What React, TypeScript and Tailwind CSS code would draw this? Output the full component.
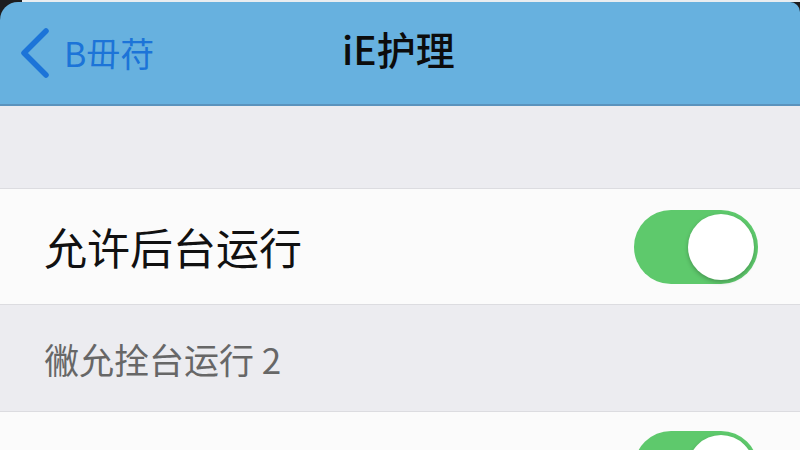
import { useState } from "react";

function Toggle({ on, onChange }: { on: boolean; onChange: () => void }) {
  return (
    <button
      onClick={onChange}
      className={
        "relative flex h-[74px] w-[124px] shrink-0 items-center rounded-full p-[4px] " +
        (on ? "justify-end bg-[#5ec96c]" : "justify-start bg-[#e5e5ea]")
      }
    >
      <span className="h-[66px] w-[66px] rounded-full bg-white shadow-[0_2px_4px_rgba(0,0,0,0.25)]" />
    </button>
  );
}

export default function App() {
  const [background, setBackground] = useState(true);
  const [second, setSecond] = useState(true);

  return (
    <div className="h-[450px] w-[800px] overflow-hidden bg-[#1d1d1f] font-['Noto_Sans_CJK_SC','Liberation_Sans',sans-serif]">
      <div className="h-[2px] ml-[22px] bg-[#e9edf0]" />
      <header className="relative flex h-[104px] items-center rounded-tl-[18px] rounded-tr-[10px] border-b-2 border-[#5b93bd] bg-[#67b1df]">
        <button className="flex items-center gap-[14px] pl-[20px] text-[#1c74d8]">
          <svg width="30" height="50" viewBox="0 0 30 50" fill="none">
            <path d="M26 3 L4 25 L26 47" stroke="currentColor" strokeWidth="5.5" strokeLinecap="round" strokeLinejoin="round" />
          </svg>
          <span className="text-[34px] leading-none">B毌苻</span>
        </button>
        <h1 className="absolute left-[342px] top-[27px] text-[39px] font-medium leading-none text-[#0c0c0c]">iE护理</h1>
      </header>
      <div className="bg-[#ececf0]">
        <div className="h-[82px]" />
        <div className="flex h-[117px] items-center justify-between border-y border-[#dcdce0] bg-[#fbfbfb] pl-[44px] pr-[42px]">
          <span className="text-[43px] leading-none text-[#111]">允许后台运行</span>
          <Toggle on={background} onChange={() => setBackground(!background)} />
        </div>
        <div className="flex h-[106px] items-center pl-[44px]">
          <span className="text-[35px] leading-none text-[#676767]">徶允拴台运行 2</span>
        </div>
        <div className="flex h-[140px] items-start justify-between border-t border-[#dcdce0] bg-[#fbfbfb] pl-[44px] pr-[42px] pt-[19px]">
          <span className="mt-[26px] text-[43px] leading-none text-[#111]">允许后台运行</span>
          <Toggle on={second} onChange={() => setSecond(!second)} />
        </div>
      </div>
    </div>
  );
}
